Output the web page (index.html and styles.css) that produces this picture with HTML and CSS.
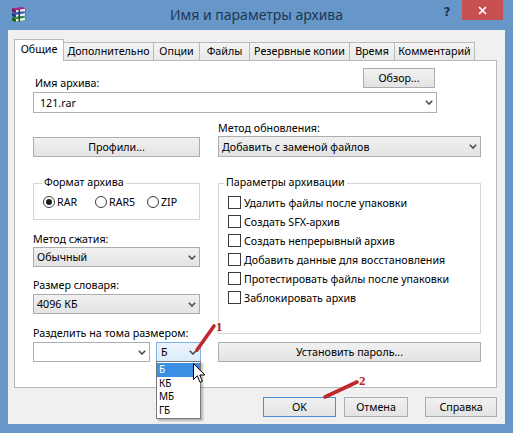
FILE: index.html
```html
<!DOCTYPE html>
<html lang="ru">
<head>
<meta charset="utf-8">
<title>Имя и параметры архива</title>
<link rel="stylesheet" href="styles.css">
</head>
<body>
<div class="window">
  <div class="titlebar">
    <div class="tb-left">
      <svg class="app-icon" width="17" height="17" viewBox="0 0 17 17">
        <path d="M2 2.5 L12 1 L15.5 2.5 L15.5 5.5 L5.5 7 L2 5.5 Z" fill="#a12a80"/>
        <path d="M2 2.5 L5.5 4 L5.5 7 L2 5.5 Z" fill="#6d1455"/>
        <path d="M6 4.2 L15 2.8 L15 5.2 L6 6.5 Z" fill="#f2e6ee"/>
        <path d="M2 7 L12 5.5 L15.5 7 L15.5 10 L5.5 11.5 L2 10 Z" fill="#2f5fc0"/>
        <path d="M2 7 L5.5 8.5 L5.5 11.5 L2 10 Z" fill="#1a3b82"/>
        <path d="M6 8.7 L15 7.3 L15 9.7 L6 11 Z" fill="#e8eef8"/>
        <path d="M2 11.5 L12 10 L15.5 11.5 L15.5 14.5 L5.5 16 L2 14.5 Z" fill="#2f8f3c"/>
        <path d="M2 11.5 L5.5 13 L5.5 16 L2 14.5 Z" fill="#1b5a24"/>
        <path d="M6 13.2 L15 11.8 L15 14.2 L6 15.5 Z" fill="#e9f4ea"/>
        <path d="M8.5 3.6 L10 3.4 L10 15.2 L8.5 15.4 Z" fill="#3b3226"/>
      </svg>
    </div>
    <div class="title">Имя и параметры архива</div>
    <div class="tb-right">
      <span class="help">?</span>
      <span class="close">
        <svg width="9" height="9" viewBox="0 0 9 9"><path d="M1 1 L8 8 M8 1 L1 8" stroke="#fff" stroke-width="1.7"/></svg>
      </span>
    </div>
  </div>

  <div class="client">
    <div class="tabs">
      <div class="tab active">Общие</div>
      <div class="tab">Дополнительно</div>
      <div class="tab">Опции</div>
      <div class="tab">Файлы</div>
      <div class="tab">Резервные копии</div>
      <div class="tab">Время</div>
      <div class="tab">Комментарий</div>
    </div>

    <div class="panel">
      <div class="row-name">
        <span class="lbl name-lbl">Имя архива:</span>
        <div class="btn browse">Обзор...</div>
      </div>
      <div class="combo edit name-combo">
        <span class="val">121.rar</span>
        <svg class="chev" width="8" height="5" viewBox="0 0 8 5"><path d="M0.8 0.8 L4 4 L7.2 0.8" fill="none" stroke="#4a4a4a" stroke-width="1.6"/></svg>
      </div>

      <div class="cols">
        <div class="col col-left">
          <div class="btn profiles">Профили...</div>

          <div class="group fmt">
            <span class="legend">Формат архива</span>
            <div class="radios">
              <span class="radio on"><i class="rb"></i>RAR</span>
              <span class="radio"><i class="rb"></i>RAR5</span>
              <span class="radio"><i class="rb"></i>ZIP</span>
            </div>
          </div>

          <span class="lbl m1">Метод сжатия:</span>
          <div class="combo ro c20 m-1">
            <span class="val">Обычный</span>
            <svg class="chev" width="8" height="5" viewBox="0 0 8 5"><path d="M0.8 0.8 L4 4 L7.2 0.8" fill="none" stroke="#4a4a4a" stroke-width="1.6"/></svg>
          </div>

          <span class="lbl m2">Размер словаря:</span>
          <div class="combo ro c20 m-2">
            <span class="val">4096 КБ</span>
            <svg class="chev" width="8" height="5" viewBox="0 0 8 5"><path d="M0.8 0.8 L4 4 L7.2 0.8" fill="none" stroke="#4a4a4a" stroke-width="1.6"/></svg>
          </div>

          <span class="lbl m3">Разделить на тома размером:</span>
          <div class="split-row">
            <div class="combo edit c20 split-size">
              <span class="val"></span>
              <svg class="chev" width="8" height="5" viewBox="0 0 8 5"><path d="M0.8 0.8 L4 4 L7.2 0.8" fill="none" stroke="#4a4a4a" stroke-width="1.6"/></svg>
            </div>
            <div class="combo hot c20 split-unit">
              <span class="val">Б</span>
              <svg class="chev" width="8" height="5" viewBox="0 0 8 5"><path d="M0.8 0.8 L4 4 L7.2 0.8" fill="none" stroke="#4a4a4a" stroke-width="1.6"/></svg>
              <ul class="dropdown">
                <li class="sel">Б</li>
                <li>КБ</li>
                <li>МБ</li>
                <li>ГБ</li>
              </ul>
            </div>
          </div>
        </div>

        <div class="col col-right">
          <span class="lbl">Метод обновления:</span>
          <div class="combo ro c21 m-1">
            <span class="val">Добавить с заменой файлов</span>
            <svg class="chev" width="8" height="5" viewBox="0 0 8 5"><path d="M0.8 0.8 L4 4 L7.2 0.8" fill="none" stroke="#4a4a4a" stroke-width="1.6"/></svg>
          </div>

          <div class="group opts">
            <span class="legend">Параметры архивации</span>
            <ul class="checks">
              <li><i class="cb"></i>Удалить файлы после упаковки</li>
              <li><i class="cb"></i>Создать SFX-архив</li>
              <li><i class="cb"></i>Создать непрерывный архив</li>
              <li><i class="cb"></i>Добавить данные для восстановления</li>
              <li><i class="cb"></i>Протестировать файлы после упаковки</li>
              <li><i class="cb"></i>Заблокировать архив</li>
            </ul>
          </div>

          <div class="btn password">Установить пароль...</div>
        </div>
      </div>
    </div>

    <div class="footer">
      <div class="btn ok">OK</div>
      <div class="btn cancel">Отмена</div>
      <div class="btn help-btn">Справка</div>
    </div>
  </div>

  <svg class="marks" width="513" height="433" viewBox="0 0 513 433">
    <path d="M197 350 L214 326" stroke="#c0282d" stroke-width="3.6" stroke-linecap="round"/>
    <text x="216" y="331" class="mark-num">1</text>
    <path d="M325 397 L357 382" stroke="#c0282d" stroke-width="3.6" stroke-linecap="round"/>
    <text x="359" y="385" class="mark-num">2</text>
  </svg>

  <svg class="cursor" width="13" height="21" viewBox="0 0 13 21">
    <path d="M0.5 0.5 L0.5 16.5 L4.3 12.8 L7 19.3 L9.4 18.3 L6.8 12 L11.8 12 Z" fill="#fff" stroke="#000" stroke-width="1" stroke-linejoin="round"/>
  </svg>
</div>
</body>
</html>
```

FILE: styles.css
```css
* { box-sizing: border-box; }

body {
  margin: 0;
  background: #6797c8;
  font-family: "Noto Sans", "Open Sans", sans-serif;
  font-size: 10.7px;
  color: #000;
}

.window {
  position: relative;
  width: 513px;
  height: 433px;
  background: #6797c8;
  display: flex;
  flex-direction: column;
  overflow: hidden;
}

/* title bar */
.titlebar {
  height: 30px;
  flex: none;
  display: grid;
  grid-template-columns: 1fr auto 1fr;
  align-items: start;
}
.tb-left { padding: 6px 0 0 10px; }
.app-icon { display: block; }
.title {
  font-size: 14px;
  line-height: 30px;
  color: #1d3653;
}
.tb-right {
  justify-self: end;
  display: flex;
  margin-right: 10px;
}
.help {
  width: 26px;
  margin-right: 2px;
  text-align: center;
  font-family: "DejaVu Sans", sans-serif;
  font-weight: bold;
  font-size: 12px;
  line-height: 14px;
  margin-top: 5px;
  color: #1d3653;
}
.close {
  width: 41px;
  height: 20px;
  background: #c75050;
  display: flex;
  align-items: center;
  justify-content: center;
}

/* client */
.client {
  margin: 0 8px;
  height: 394px;
  flex: none;
  background: #f0f0f0;
  display: flex;
  flex-direction: column;
}

.tabs {
  display: flex;
  align-items: flex-end;
  height: 22px;
  margin: 9px 0 0 6px;
  position: relative;
  z-index: 2;
}
.tab {
  height: 18px;
  margin-bottom: 1px;
  margin-left: -1px;
  border: 1px solid #b9b9b9;
  border-bottom: none;
  background: linear-gradient(#f4f4f4, #e9e9e9);
  text-align: center;
  line-height: 16px;
  white-space: nowrap;
}
.tab.active {
  height: 22px;
  margin-bottom: 0;
  margin-left: 0;
  background: #fff;
  line-height: 19px;
  position: relative;
  z-index: 3;
  width: 50px;
}
.tab:nth-child(2) { width: 91px; }
.tab:nth-child(3) { width: 47px; }
.tab:nth-child(4) { width: 51px; }
.tab:nth-child(5) { width: 101px; }
.tab:nth-child(6) { width: 46px; }
.tab:nth-child(7) { width: 81px; }

.panel {
  width: 483px;
  height: 328px;
  margin: -1px 0 0 6px;
  background: #fff;
  border: 1px solid #b9b9b9;
  padding: 7px 0 0 18px;
  position: relative;
  z-index: 1;
}

.lbl {
  display: block;
  line-height: 14px;
  white-space: nowrap;
}

.row-name {
  display: flex;
  width: 404px;
  height: 20px;
}
.name-lbl { margin-top: 8px; padding-left: 2px; }

.btn {
  height: 20px;
  border: 1px solid #acacac;
  background: linear-gradient(#f1f1f1, #e3e3e3);
  text-align: center;
  line-height: 18px;
  white-space: nowrap;
}
.browse {
  margin-left: auto;
  margin-right: 2px;
  width: 72px;
}

.combo {
  display: flex;
  align-items: center;
  border: 1px solid #acacac;
  padding: 0 3px 0 4px;
  position: relative;
  white-space: nowrap;
}
.combo .val { flex: 1; line-height: 14px; }
.combo .chev { flex: none; display: block; }
.combo.edit { background: #fff; border-color: #abadb3; }
.combo.ro { background: linear-gradient(#f1f1f1, #e3e3e3); padding-left: 3px; }
.combo.hot {
  background: linear-gradient(#ecf4fc, #dcecfc);
  border-color: #7eb4ea;
}
.name-combo {
  margin-top: 4px;
  width: 404px;
  height: 21px;
  padding-left: 6px;
}
.c20 { height: 20px; }
.c21 { height: 21px; }
.m-1 { margin-top: 1px; }
.m-2 { margin-top: 2px; }

.cols {
  display: grid;
  grid-template-columns: 167px 263px;
  column-gap: 18px;
  margin-top: 8px;
  align-items: start;
}
.col { display: flex; flex-direction: column; }

.profiles { margin-top: 16px; }

.group {
  border: 1px solid #d5d5d5;
  margin-top: 26px;
  padding-left: 9px;
}
.legend {
  display: block;
  width: max-content;
  margin-top: -9px;
  padding: 0 2px;
  background: #fff;
  line-height: 14px;
}
.fmt { height: 37px; }
.fmt .legend { margin-left: -1px; }
.opts { height: 151px; }
.opts .legend { margin-left: -4px; }

.radios {
  display: flex;
  margin-top: 6px;
  line-height: 14px;
}
.radio {
  display: flex;
  align-items: center;
  width: 54px;
}
.rb {
  width: 12px;
  height: 12px;
  border: 1px solid #3a3a3a;
  border-radius: 50%;
  background: #fff;
  margin-right: 2px;
  position: relative;
  flex: none;
}
.radio.on .rb::after {
  content: "";
  position: absolute;
  left: 2px;
  top: 2px;
  width: 6px;
  height: 6px;
  border-radius: 50%;
  background: #1a1a1a;
}

.checks {
  list-style: none;
  margin: 4px 0 0;
  padding: 0;
}
.checks li {
  display: flex;
  align-items: center;
  height: 19px;
  white-space: nowrap;
}
.cb {
  width: 13px;
  height: 13px;
  border: 1px solid #3a3a3a;
  background: #fff;
  margin-right: 3px;
  flex: none;
}

.m1 { margin-top: 12px; }
.m2 { margin-top: 11px; }
.m3 { margin-top: 12px; }

.split-row {
  display: flex;
  margin-top: 2px;
  width: 168px;
}
.split-size { width: 117px; }
.split-unit { width: 45px; margin-left: 6px; }

.dropdown {
  position: absolute;
  left: -1px;
  top: 18px;
  width: 45px;
  margin: 0;
  padding: 1px 0;
  list-style: none;
  background: #fff;
  border: 1px solid #7a7a7a;
  box-shadow: 2px 2px 2px rgba(0, 0, 0, 0.25);
  z-index: 5;
}
.dropdown li {
  height: 13.5px;
  line-height: 13.5px;
  font-size: 10px;
  padding-left: 2px;
  overflow: hidden;
}
.dropdown li.sel {
  background: #3a8fe4;
  color: #fff;
}

.password { margin-top: 8px; }

.footer {
  display: flex;
  justify-content: flex-end;
  margin-top: 9px;
  padding-right: 8px;
}
.ok { width: 73px; border-color: #4a8fd8; }
.cancel { width: 64px; margin-left: 8px; }
.help-btn { width: 72px; margin-left: 17px; }

/* annotations & pointer overlays */
.marks {
  position: absolute;
  left: 0;
  top: 0;
  pointer-events: none;
  z-index: 10;
}
.mark-num {
  font-family: "Liberation Serif", serif;
  font-weight: bold;
  font-size: 13px;
  fill: #b8242a;
}
.cursor {
  position: absolute;
  left: 193px;
  top: 363px;
  z-index: 11;
}
```
